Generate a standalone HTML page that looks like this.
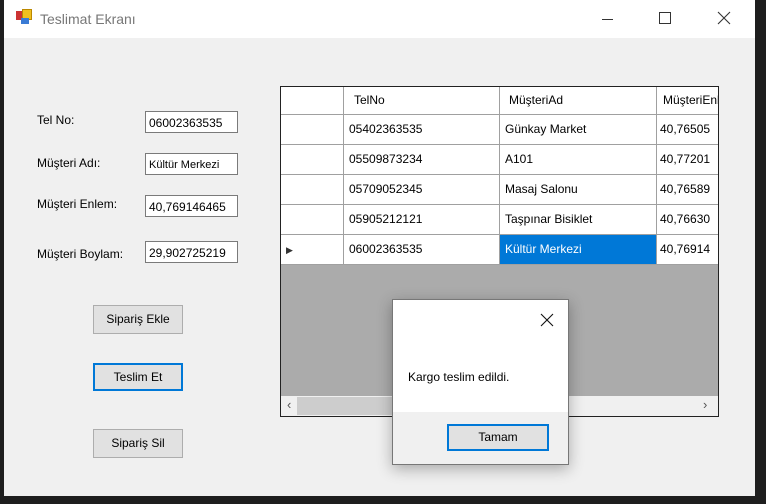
<!DOCTYPE html>
<html><head><style>
body{margin:0;width:766px;height:504px;background:#1e1e1e;position:relative;overflow:hidden;font-family:"Liberation Sans",sans-serif;font-size:12px;color:#000}
.a{position:absolute}
.win{left:4px;top:0;width:751px;height:496px;background:#f0f0f0}
.tb{left:0;top:0;width:751px;height:38px;background:#fff}
.lbl{font-size:12px}
.tx{background:#fff;border:1px solid #7a7a7a;height:22px;width:93px;line-height:22px;padding-left:3px;box-sizing:border-box;font-size:12px;overflow:hidden;white-space:nowrap}
.btn{background:#e1e1e1;border:1px solid #adadad;box-sizing:border-box;text-align:center;font-size:12px}
.c{position:absolute;box-sizing:border-box;border-right:1px solid #a0a0a0;border-bottom:1px solid #a0a0a0;background:#fff;padding-left:5px;line-height:29px;font-size:12px;overflow:hidden;white-space:nowrap}
</style></head><body>
<div class="a win">
 <div class="a tb">
  <div class="a" style="left:12px;top:11px;width:7px;height:9px;background:#c33"></div>
  <div class="a" style="left:18px;top:9px;width:8px;height:9px;background:#f0c020;border:1px solid #b80"></div>
  <div class="a" style="left:17px;top:18px;width:8px;height:6px;background:#3a7bd5"></div>
  <div class="a" style="left:36px;top:11px;font-size:14px;color:#777">Teslimat Ekranı</div>
  <div class="a" style="left:598px;top:19px;width:11px;height:1px;background:#333"></div>
  <div class="a" style="left:655px;top:12px;width:10px;height:10px;border:1px solid #333"></div>
  <svg class="a" style="left:713px;top:11px" width="14" height="14"><path d="M1 1L13 13M13 1L1 13" stroke="#333" stroke-width="1.1"/></svg>
 </div>
</div>
<div class="a lbl" style="left:37px;top:113px">Tel No:</div>
<div class="a lbl" style="left:37px;top:156px">Müşteri Adı:</div>
<div class="a lbl" style="left:37px;top:197px">Müşteri Enlem:</div>
<div class="a lbl" style="left:37px;top:247px">Müşteri Boylam:</div>
<div class="a tx" style="left:145px;top:111px">06002363535</div>
<div class="a tx" style="left:145px;top:153px;font-size:11px">Kültür Merkezi</div>
<div class="a tx" style="left:145px;top:195px">40,769146465</div>
<div class="a tx" style="left:145px;top:241px">29,902725219</div>
<div class="a btn" style="left:93px;top:305px;width:90px;height:29px;line-height:27px">Sipariş Ekle</div>
<div class="a btn" style="left:93px;top:363px;width:90px;height:28px;line-height:24px;border:2px solid #0078d7">Teslim Et</div>
<div class="a btn" style="left:93px;top:429px;width:90px;height:29px;line-height:27px">Sipariş Sil</div>

<div class="a" style="left:280px;top:86px;width:439px;height:331px;border:1px solid #222;box-sizing:border-box;background:#ababab;overflow:hidden">
 <div class="c" style="left:0;top:0;width:63px;height:28px"></div>
 <div class="c" style="left:63px;top:0;width:156px;height:28px;line-height:27px;padding-left:10px">TelNo</div>
 <div class="c" style="left:219px;top:0;width:157px;height:28px;line-height:27px;padding-left:9px">MüşteriAd</div>
 <div class="c" style="left:376px;top:0;width:70px;height:28px;line-height:27px;padding-left:6px">MüşteriEnlem</div>
 <div id="rows"></div>
 <div class="a" style="left:0;top:309px;width:437px;height:20px;background:#f0f0f0"></div>
 <div class="a" style="left:16px;top:310px;width:110px;height:18px;background:#cdcdcd"></div>
 <div class="a" style="left:6px;top:310px;font-size:13px;color:#555">‹</div>
 <div class="a" style="left:422px;top:310px;font-size:13px;color:#555">›</div>
</div>

<div class="a" style="left:392px;top:299px;width:177px;height:166px;background:#f0f0f0;border:1px solid #777;box-sizing:border-box;box-shadow:0 4px 14px rgba(0,0,0,.3)">
 <div class="a" style="left:0;top:0;width:175px;height:112px;background:#fff"></div>
 <svg class="a" style="left:147px;top:13px" width="14" height="14"><path d="M1 1L13 13M13 1L1 13" stroke="#111" stroke-width="1.1"/></svg>
 <div class="a" style="left:15px;top:70px">Kargo teslim edildi.</div>
 <div class="a btn" style="left:54px;top:124px;width:102px;height:27px;line-height:23px;border:2px solid #0078d7">Tamam</div>
</div>
<script>
var d=[["05402363535","Günkay Market","40,76505"],["05509873234","A101","40,77201"],["05709052345","Masaj Salonu","40,76589"],["05905212121","Taşpınar Bisiklet","40,76630"],["06002363535","Kültür Merkezi","40,76914"]];
var h="";d.forEach(function(r,i){var t=28+i*30;
h+='<div class="c" style="left:0;top:'+t+'px;width:63px;height:30px">'+(i==4?'<span style="font-size:9px;color:#333">&#9654;</span>':'')+'</div>';
h+='<div class="c" style="left:63px;top:'+t+'px;width:156px;height:30px">'+r[0]+'</div>';
h+='<div class="c" style="left:219px;top:'+t+'px;width:157px;height:30px;'+(i==4?'background:#0078d7;color:#fff':'')+'">'+r[1]+'</div>';
h+='<div class="c" style="left:376px;top:'+t+'px;width:70px;height:30px;padding-left:3px">'+r[2]+'</div>';});
document.getElementById('rows').outerHTML=h;
</script>
</body></html>
